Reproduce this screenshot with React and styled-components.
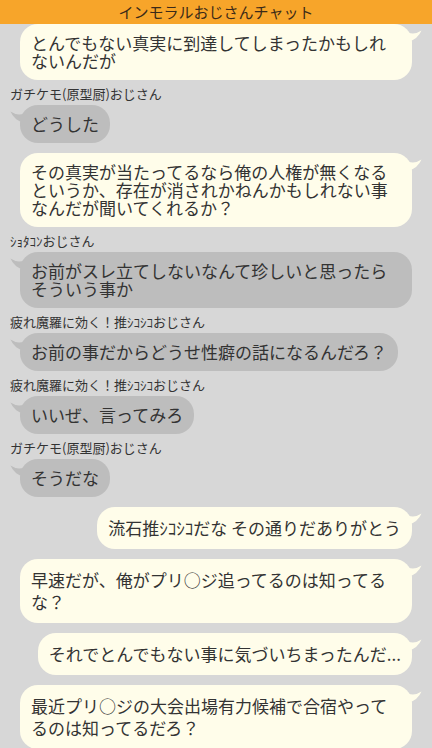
import React from 'react';
import styled, { createGlobalStyle } from 'styled-components';

const messages = [
    { mine: true, text: 'とんでもない真実に到達してしまったかもしれないんだが' },
    { name: 'ガチケモ(原型厨)おじさん', text: 'どうした' },
    { mine: true, text: 'その真実が当たってるなら俺の人権が無くなるというか、存在が消されかねんかもしれない事なんだが聞いてくれるか？' },
    { name: 'ｼｮﾀｺﾝおじさん', text: 'お前がスレ立てしないなんて珍しいと思ったらそういう事か' },
    { name: '疲れ魔羅に効く！推ｼｺｼｺおじさん', text: 'お前の事だからどうせ性癖の話になるんだろ？' },
    { name: '疲れ魔羅に効く！推ｼｺｼｺおじさん', text: 'いいぜ、言ってみろ' },
    { name: 'ガチケモ(原型厨)おじさん', text: 'そうだな' },
    { mine: true, loose: true, text: '流石推ｼｺｼｺだな その通りだありがとう' },
    { mine: true, loose: true, text: '早速だが、俺がプリ○ジ追ってるのは知ってるな？' },
    { mine: true, loose: true, text: 'それでとんでもない事に気づいちまったんだ...' },
    { mine: true, loose: true, text: '最近プリ○ジの大会出場有力候補で合宿やってるのは知ってるだろ？' },
];

const CREAM = '#fffdea';
const GREY = '#bdbdbd';

const App = () => {
    return (
        <>
            <GlobalStyle />
            <Screen>
                <Header>インモラルおじさんチャット</Header>
                <ChatList>
                    {messages.map((m, idx) => (
                        <Message key={idx} mine={m.mine} {...m} />
                    ))}
                </ChatList>
            </Screen>
        </>
    );
};

const Message = ({ mine, name, text, loose }) => {
    const fill = mine ? CREAM : GREY;

    return (
        <Row $mine={mine}>
            {name && <Name>{name}</Name>}
            <Bubble $fill={fill} $loose={loose}>
                <Tail $mine={mine} viewBox="0 0 14 12" width="14" height="12">
                    {mine ? (
                        <path d="M0 2.5 Q7 5 13.5 0.5 Q10 9 0 12 Z" fill={fill} />
                    ) : (
                        <path d="M14 2.5 Q7 5 0.5 0.5 Q4 9 14 12 Z" fill={fill} />
                    )}
                </Tail>
                {text}
            </Bubble>
        </Row>
    );
};

const GlobalStyle = createGlobalStyle`
    body {
        margin: 0;
        background: #d7d7d7;
        font-family: "Noto Sans CJK JP", "Noto Sans", sans-serif;
        color: #333;
    }
`;

const Screen = styled.div`
    width: 432px;
    height: 748px;
    overflow: hidden;
    display: flex;
    flex-direction: column;
    background: #d7d7d7;
`;

const Header = styled.div`
    position: relative;
    z-index: 2;
    flex: none;
    height: 24px;
    display: flex;
    align-items: center;
    justify-content: center;
    background: #f7a52a;
    color: #3b2a18;
    font-size: 15px;
    line-height: 24px;
`;

const ChatList = styled.div`
    display: flex;
    flex-direction: column;
    gap: 6px;
    padding: 0 10px;
    margin-top: -4px;
`;

const Row = styled.div`
    display: flex;
    flex-direction: column;
    align-items: ${({ $mine }) => ($mine ? 'flex-end' : 'flex-start')};
    margin-top: ${({ $mine }) => ($mine ? '4px' : '0')};
`;

const Name = styled.div`
    font-size: 13px;
    line-height: 15px;
    color: #333;
    margin-bottom: 4px;
    white-space: nowrap;
`;

const Bubble = styled.div`
    position: relative;
    max-width: 392px;
    box-sizing: border-box;
    margin: 0 10px;
    padding: 10px 11px;
    border-radius: 18px;
    background: ${({ $fill }) => $fill};
    font-size: 17px;
    line-height: ${({ $loose }) => ($loose ? '22px' : '18px')};
    color: #333;
    word-break: break-all;
`;

const Tail = styled.svg`
    position: absolute;
    top: 6px;
    ${({ $mine }) => ($mine ? 'right: -10px;' : 'left: -10px;')}
`;

export default App;
